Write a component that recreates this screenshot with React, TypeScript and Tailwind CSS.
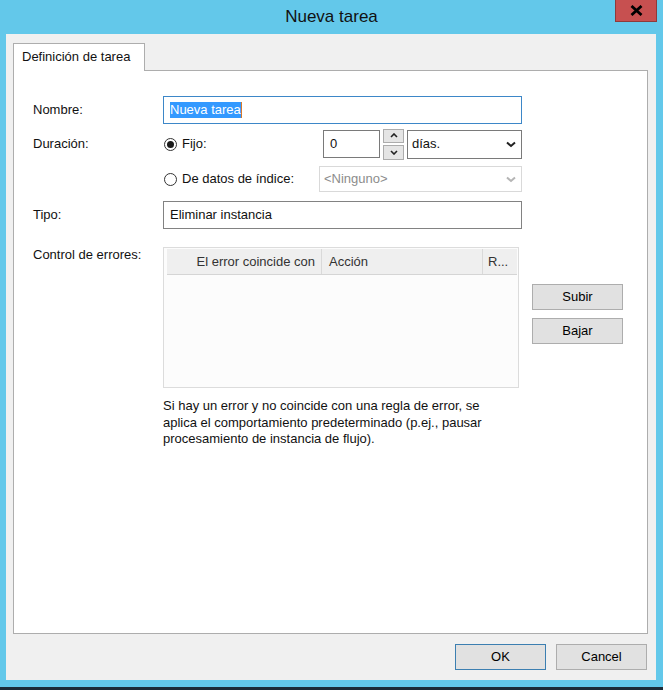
import type { ReactNode } from "react";

const sans = "font-['Liberation_Sans',Arial,sans-serif]";

function Radio({ checked }: { checked?: boolean }) {
  return (
    <span className="flex h-[13px] w-[13px] shrink-0 items-center justify-center rounded-full border border-[#333333] bg-white">
      {checked && <span className="h-[7px] w-[7px] rounded-full bg-[#1a1a1a]" />}
    </span>
  );
}

function Chevron({ color = "#222222" }: { color?: string }) {
  return (
    <svg width="10" height="7" viewBox="0 0 10 7" className="shrink-0">
      <path d="M1 1.5l4 3.5 4-3.5" fill="none" stroke={color} strokeWidth="2" />
    </svg>
  );
}

function Btn({ children, primary }: { children: ReactNode; primary?: boolean }) {
  return (
    <button
      className={
        primary
          ? "flex h-[26px] w-[91px] items-center justify-center border border-[#3c7fb1] bg-[#e1e1e1] text-[13px] text-black"
          : "flex h-[26px] w-[91px] items-center justify-center border border-[#adadad] bg-[#e1e1e1] text-[13px] text-black"
      }
    >
      {children}
    </button>
  );
}

export default function App() {
  return (
    <div className={`flex h-[690px] w-[663px] flex-col overflow-hidden bg-[#63c8ea] text-[13px] text-[#111111] ${sans}`}>
      {/* title bar */}
      <div className="relative flex h-[34px] shrink-0 items-center justify-center">
        <span className="text-[17px] text-[#111111]">Nueva tarea</span>
        <div className="absolute right-[6px] top-0 flex h-[22px] w-[42px] items-center justify-center border border-t-0 border-[#8f3a3a] bg-[#c75050]">
          <svg width="13" height="11" viewBox="0 0 13 11">
            <path d="M1.5 1l10 9M11.5 1l-10 9" stroke="#000" strokeWidth="2.8" />
          </svg>
        </div>
      </div>

      {/* client area */}
      <div className="ml-[6px] flex h-[646px] w-[650px] shrink-0 flex-col bg-[#f0f0f0]">
        <div className="relative z-10 ml-[7px] mt-[9px] flex h-[28px] w-[132px] items-center border border-b-0 border-[#adadad] bg-white pb-[2px] pl-[8px]">
          Definición de tarea
        </div>

        <div className="relative z-0 -mt-px ml-[7px] h-[564px] w-[635px] border border-[#adadad] bg-white pl-[19px] pt-[25px]">
          {/* Nombre */}
          <div className="flex h-[28px] items-center">
            <span className="w-[130px]">Nombre:</span>
            <div className="flex h-[28px] w-[359px] items-center border border-[#3d87c8] pl-[6px]">
              <span className="bg-[#3399ff] leading-[16px] text-white">Nueva tarea</span>
              <span className="h-[16px] w-px bg-[#d97a2b]" />
            </div>
          </div>

          {/* Duración */}
          <div className="mt-[6px] flex h-[28px] items-center">
            <span className="w-[130px]">Duración:</span>
            <div className="flex w-[160px] items-center gap-[5px] pl-px">
              <Radio checked />
              <span>Fijo:</span>
            </div>
            <div className="flex h-[28px] w-[57px] items-center border border-[#7a7a7a] pb-px pl-[6px]">0</div>
            <div className="ml-[3px] flex h-[31px] w-[21px] flex-col gap-[2px]">
              <div className="flex flex-1 items-center justify-center border border-[#acacac] bg-[#e5e5e5]">
                <svg width="8" height="5" viewBox="0 0 8 5">
                  <path d="M1 4l3-3 3 3" fill="none" stroke="#222" strokeWidth="1.6" />
                </svg>
              </div>
              <div className="flex flex-1 items-center justify-center border border-[#acacac] bg-[#e5e5e5]">
                <svg width="8" height="5" viewBox="0 0 8 5">
                  <path d="M1 1l3 3 3-3" fill="none" stroke="#222" strokeWidth="1.6" />
                </svg>
              </div>
            </div>
            <div className="ml-[3px] flex h-[29px] w-[115px] items-center justify-between border border-[#7a7a7a] pl-[4px] pr-[5px]">
              <span>días.</span>
              <Chevron />
            </div>
          </div>

          <div className="mt-[8px] flex h-[26px] items-center pl-[130px]">
            <div className="flex w-[156px] items-center gap-[5px] pl-px">
              <Radio />
              <span>De datos de índice:</span>
            </div>
            <div className="flex h-[26px] w-[203px] items-center justify-between border border-[#d9d9d9] pl-[4px] pr-[5px] text-[#8c8c8c]">
              <span>&lt;Ninguno&gt;</span>
              <Chevron color="#b5b5b5" />
            </div>
          </div>

          {/* Tipo */}
          <div className="mt-[9px] flex h-[28px] items-center">
            <span className="w-[130px]">Tipo:</span>
            <div className="flex h-[28px] w-[359px] items-center border border-[#828282] pb-px pl-[6px]">
              Eliminar instancia
            </div>
          </div>

          {/* Control de errores */}
          <div className="mt-[18px] flex items-start">
            <span className="w-[130px] leading-[15px]">Control de errores:</span>
            <div className="h-[141px] w-[356px] border border-[#dcdcdc] bg-[#fcfcfc] pl-[3px] pr-px pt-px">
              <div className="flex h-[26px] border-b border-[#d5d5d5] bg-[#efefef] text-[#333333]">
                <div className="flex w-[155px] items-center justify-end border-r border-[#d9d9d9] pr-[6px]">El error coincide con</div>
                <div className="flex w-[161px] items-center border-r border-[#d9d9d9] pl-[7px]">Acción</div>
                <div className="flex flex-1 items-center pl-[5px]">R...</div>
              </div>
            </div>
            <div className="ml-[13px] mt-[37px] flex flex-col gap-[8px]">
              <Btn>Subir</Btn>
              <Btn>Bajar</Btn>
            </div>
          </div>

          <p className="ml-[130px] mt-[10px] leading-[16.5px]">
            Si hay un error y no coincide con una regla de error, se
            <br />
            aplica el comportamiento predeterminado (p.ej., pausar
            <br />
            procesamiento de instancia de flujo).
          </p>
        </div>

        <div className="mt-[10px] flex justify-end gap-[10px] pr-[9px]">
          <Btn primary>OK</Btn>
          <Btn>Cancel</Btn>
        </div>
      </div>

      <div className="h-[7px] shrink-0" />
      <div className="flex-1 bg-[#1c2b38]" />
    </div>
  );
}
